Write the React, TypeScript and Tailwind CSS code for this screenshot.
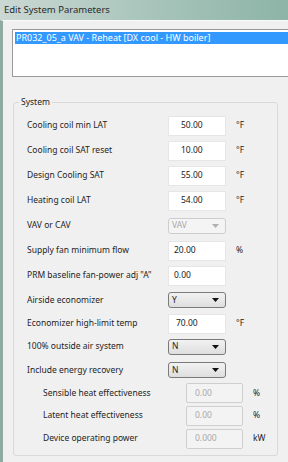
import React from "react";

type Kind = "input" | "select" | "disabledSelect" | "disabledInput";

interface Row {
  label: string;
  value: string;
  kind: Kind;
  unit?: string;
  pad?: string;
  sub?: boolean;
  h: string;
}

const rows: Row[] = [
  { label: "Cooling coil min LAT", value: "50.00", kind: "input", unit: "°F", pad: "pl-[12px]", h: "h-[25px]" },
  { label: "Cooling coil SAT reset", value: "10.00", kind: "input", unit: "°F", pad: "pl-[12px]", h: "h-[25px]" },
  { label: "Design Cooling SAT", value: "55.00", kind: "input", unit: "°F", pad: "pl-[12px]", h: "h-[25px]" },
  { label: "Heating coil LAT", value: "54.00", kind: "input", unit: "°F", pad: "pl-[12px]", h: "h-[25px]" },
  { label: "VAV or CAV", value: "VAV", kind: "disabledSelect", h: "h-[25px]" },
  { label: "Supply fan minimum flow", value: "20.00", kind: "input", unit: "%", pad: "pl-[5px]", h: "h-[25px]" },
  { label: "PRM baseline fan-power adj \"A\"", value: "0.00", kind: "input", pad: "pl-[5px]", h: "h-[25px]" },
  { label: "Airside economizer", value: "Y", kind: "select", h: "h-[24px]" },
  { label: "Economizer high-limit temp", value: "70.00", kind: "input", unit: "°F", pad: "pl-[7px]", h: "h-[23px]" },
  { label: "100% outside air system", value: "N", kind: "select", h: "h-[23px]" },
  { label: "Include energy recovery", value: "N", kind: "select", h: "h-[24px]" },
  { label: "Sensible heat effectiveness", value: "0.00", kind: "disabledInput", unit: "%", sub: true, h: "h-[22px]" },
  { label: "Latent heat effectiveness", value: "0.00", kind: "disabledInput", unit: "%", sub: true, h: "h-[23px]" },
  { label: "Device operating power", value: "0.000", kind: "disabledInput", unit: "kW", sub: true, h: "h-[23px]" },
];

function Arrow({ color }: { color: string }) {
  return (
    <svg width="7" height="4" viewBox="0 0 7 4" className="shrink-0">
      <path d="M0 0 L7 0 L3.5 4 Z" fill={color} />
    </svg>
  );
}

function Field({ row }: { row: Row }) {
  if (row.kind === "input") {
    return (
      <div className={`w-[58px] h-[20px] bg-white border border-[#e6e6e6] flex items-center text-[#222] ${row.pad}`}>
        {row.value}
      </div>
    );
  }
  if (row.kind === "disabledInput") {
    return (
      <div className="w-[57px] h-[20px] bg-[#f3f3f3] border border-[#cfcfcf] rounded-[2px] flex items-center pl-[8px] text-[#a8a8a8]">
        {row.value}
      </div>
    );
  }
  if (row.kind === "disabledSelect") {
    return (
      <div className="w-[58px] h-[16px] bg-[#f4f4f4] border border-[#cdcdcd] rounded-[3px] flex items-center justify-between pl-[3px] pr-[6px] text-[#a8a8a8]">
        <span>{row.value}</span>
        <Arrow color="#b0b0b0" />
      </div>
    );
  }
  return (
    <div className="w-[58px] h-[16px] bg-gradient-to-b from-[#f2f2f2] to-[#dedede] border border-[#7a7a7a] rounded-[3px] flex items-center justify-between pl-[3px] pr-[6px] text-[#222]">
      <span>{row.value}</span>
      <Arrow color="#111" />
    </div>
  );
}

export default function App() {
  return (
    <div
      className="w-[288px] h-[462px] overflow-hidden bg-[#f0f0f0] text-[8.5px] text-[#1e1e1e]"
      style={{ fontFamily: "'Noto Sans', 'Open Sans', sans-serif" }}
    >
      <div className="h-[20px] bg-gradient-to-r from-[#cbd8d4] via-[#a9c5bc] to-[#8db4a7] flex items-center pl-[4px] text-[9.5px] text-[#2a2a2a]">
        Edit System Parameters
      </div>
      <div className="h-[442px] border-l-[3px] border-[#8eaaa1] border-t border-t-[#fafafa] flex flex-col">
        <div className="ml-[9px] mt-[8px] h-[48px] bg-white border border-r-0 border-[#9a9a9a] pt-[2px] pl-[2px]">
          <div className="h-[12px] bg-[#3399ff] text-white flex items-center pl-[1px] text-[9px] whitespace-nowrap">
            PR032_05_a VAV - Reheat [DX cool - HW boiler]
          </div>
        </div>
        <div className="ml-[10px] mt-[25px] w-[265px] relative border border-[#d9d9d9] rounded-[3px] pt-[10px] pb-[5px]">
          <div className="absolute left-[5px] top-[-7px] px-[2px] bg-[#f0f0f0] text-[8.5px]">System</div>
          {rows.map((row) => (
            <div key={row.label} className={`flex items-center ${row.h}`}>
              <div className={`${row.sub ? "w-[172px] pl-[29px]" : "w-[154px] pl-[13px]"} whitespace-nowrap`}>
                {row.label}
              </div>
              <Field row={row} />
              {row.unit && <div className="ml-[10px] text-[#222]">{row.unit}</div>}
            </div>
          ))}
        </div>
      </div>
    </div>
  );
}
